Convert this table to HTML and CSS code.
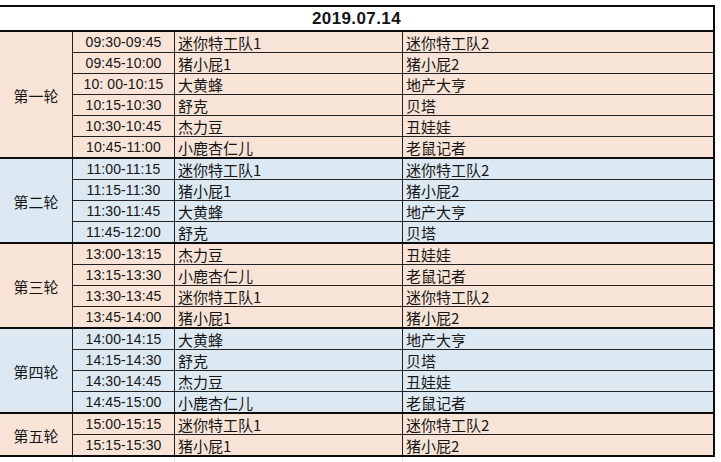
FILE: index.html
```html
<!DOCTYPE html>
<html lang="zh">
<head>
<meta charset="utf-8">
<title>2019.07.14</title>
<link rel="stylesheet" href="styles.css">
</head>
<body>
<div class="sheet">
  <div class="head">2019.07.14</div>

  <div class="group peach">
    <div class="label">第一轮</div>
    <div class="rows">
      <div class="row"><div class="time">09:30-09:45</div><div class="team a">迷你特工队1</div><div class="team b">迷你特工队2</div></div>
      <div class="row"><div class="time">09:45-10:00</div><div class="team a">猪小屁1</div><div class="team b">猪小屁2</div></div>
      <div class="row"><div class="time">10: 00-10:15</div><div class="team a">大黄蜂</div><div class="team b">地产大亨</div></div>
      <div class="row"><div class="time">10:15-10:30</div><div class="team a">舒克</div><div class="team b">贝塔</div></div>
      <div class="row"><div class="time">10:30-10:45</div><div class="team a">杰力豆</div><div class="team b">丑娃娃</div></div>
      <div class="row"><div class="time">10:45-11:00</div><div class="team a">小鹿杏仁儿</div><div class="team b">老鼠记者</div></div>
    </div>
  </div>

  <div class="group blue">
    <div class="label">第二轮</div>
    <div class="rows">
      <div class="row"><div class="time">11:00-11:15</div><div class="team a">迷你特工队1</div><div class="team b">迷你特工队2</div></div>
      <div class="row"><div class="time">11:15-11:30</div><div class="team a">猪小屁1</div><div class="team b">猪小屁2</div></div>
      <div class="row"><div class="time">11:30-11:45</div><div class="team a">大黄蜂</div><div class="team b">地产大亨</div></div>
      <div class="row"><div class="time">11:45-12:00</div><div class="team a">舒克</div><div class="team b">贝塔</div></div>
    </div>
  </div>

  <div class="group peach">
    <div class="label">第三轮</div>
    <div class="rows">
      <div class="row"><div class="time">13:00-13:15</div><div class="team a">杰力豆</div><div class="team b">丑娃娃</div></div>
      <div class="row"><div class="time">13:15-13:30</div><div class="team a">小鹿杏仁儿</div><div class="team b">老鼠记者</div></div>
      <div class="row"><div class="time">13:30-13:45</div><div class="team a">迷你特工队1</div><div class="team b">迷你特工队2</div></div>
      <div class="row"><div class="time">13:45-14:00</div><div class="team a">猪小屁1</div><div class="team b">猪小屁2</div></div>
    </div>
  </div>

  <div class="group blue">
    <div class="label">第四轮</div>
    <div class="rows">
      <div class="row"><div class="time">14:00-14:15</div><div class="team a">大黄蜂</div><div class="team b">地产大亨</div></div>
      <div class="row"><div class="time">14:15-14:30</div><div class="team a">舒克</div><div class="team b">贝塔</div></div>
      <div class="row"><div class="time">14:30-14:45</div><div class="team a">杰力豆</div><div class="team b">丑娃娃</div></div>
      <div class="row"><div class="time">14:45-15:00</div><div class="team a">小鹿杏仁儿</div><div class="team b">老鼠记者</div></div>
    </div>
  </div>

  <div class="group peach">
    <div class="label">第五轮</div>
    <div class="rows">
      <div class="row"><div class="time">15:00-15:15</div><div class="team a">迷你特工队1</div><div class="team b">迷你特工队2</div></div>
      <div class="row"><div class="time">15:15-15:30</div><div class="team a">猪小屁1</div><div class="team b">猪小屁2</div></div>
    </div>
  </div>

  <div class="grid-tail">
    <div class="tail c1"></div><div class="tail c2"></div><div class="tail c3"></div>
  </div>
</div>
</body>
</html>
```

FILE: styles.css
```css
html, body {
  margin: 0;
  padding: 0;
  background: #ffffff;
}

body {
  font-family: "Liberation Sans", "Noto Sans CJK SC", sans-serif;
  color: #151515;
  overflow: hidden;
}

.sheet {
  width: 715px;
  margin-top: 5px;
}

.head {
  box-sizing: border-box;
  height: 27px;
  border-top: 2px solid #0c0c0c;
  border-bottom: 2px solid #0c0c0c;
  border-right: 2px solid #0c0c0c;
  background: #ffffff;
  display: flex;
  align-items: center;
  justify-content: center;
  font-weight: bold;
  font-size: 17px;
  letter-spacing: 0.4px;
  line-height: 20px;
  padding-top: 1px;
}

.group {
  display: flex;
  border-bottom: 2px solid #0c0c0c;
  border-right: 2px solid #0c0c0c;
}

.peach { background: #f8e4d7; }
.blue { background: #dce9f2; }

.label {
  box-sizing: border-box;
  width: 73px;
  flex: none;
  border-right: 1px solid #222222;
  display: flex;
  align-items: center;
  justify-content: center;
  font-family: "Noto Sans CJK SC", sans-serif;
  font-size: 15px;
  padding-top: 2px;
}

.rows {
  display: flex;
  flex-direction: column;
  flex: 1;
}

.row {
  display: flex;
  box-sizing: border-box;
  height: 21px;
  border-bottom: 1px solid #222222;
}

.row:last-child {
  height: 20px;
  border-bottom: none;
}

.time, .team {
  box-sizing: border-box;
  display: flex;
  align-items: flex-end;
  line-height: 18px;
  white-space: nowrap;
}

.time {
  width: 102px;
  flex: none;
  border-right: 1px solid #222222;
  justify-content: center;
  font-size: 14px;
  letter-spacing: 0.1px;
  padding-bottom: 1px;
}

.team {
  font-family: "Noto Sans CJK SC", sans-serif;
  font-size: 15px;
  padding-left: 3px;
  padding-bottom: 0;
}

.team.a {
  width: 228px;
  flex: none;
  border-right: 1px solid #222222;
}

.team.b {
  flex: 1;
}

.grid-tail {
  display: flex;
  height: 8px;
}

.tail {
  box-sizing: border-box;
  border-right: 1px solid #e2e2e2;
}

.tail.c1 { width: 73px; }
.tail.c2 { width: 102px; }
.tail.c3 { width: 228px; }
```
